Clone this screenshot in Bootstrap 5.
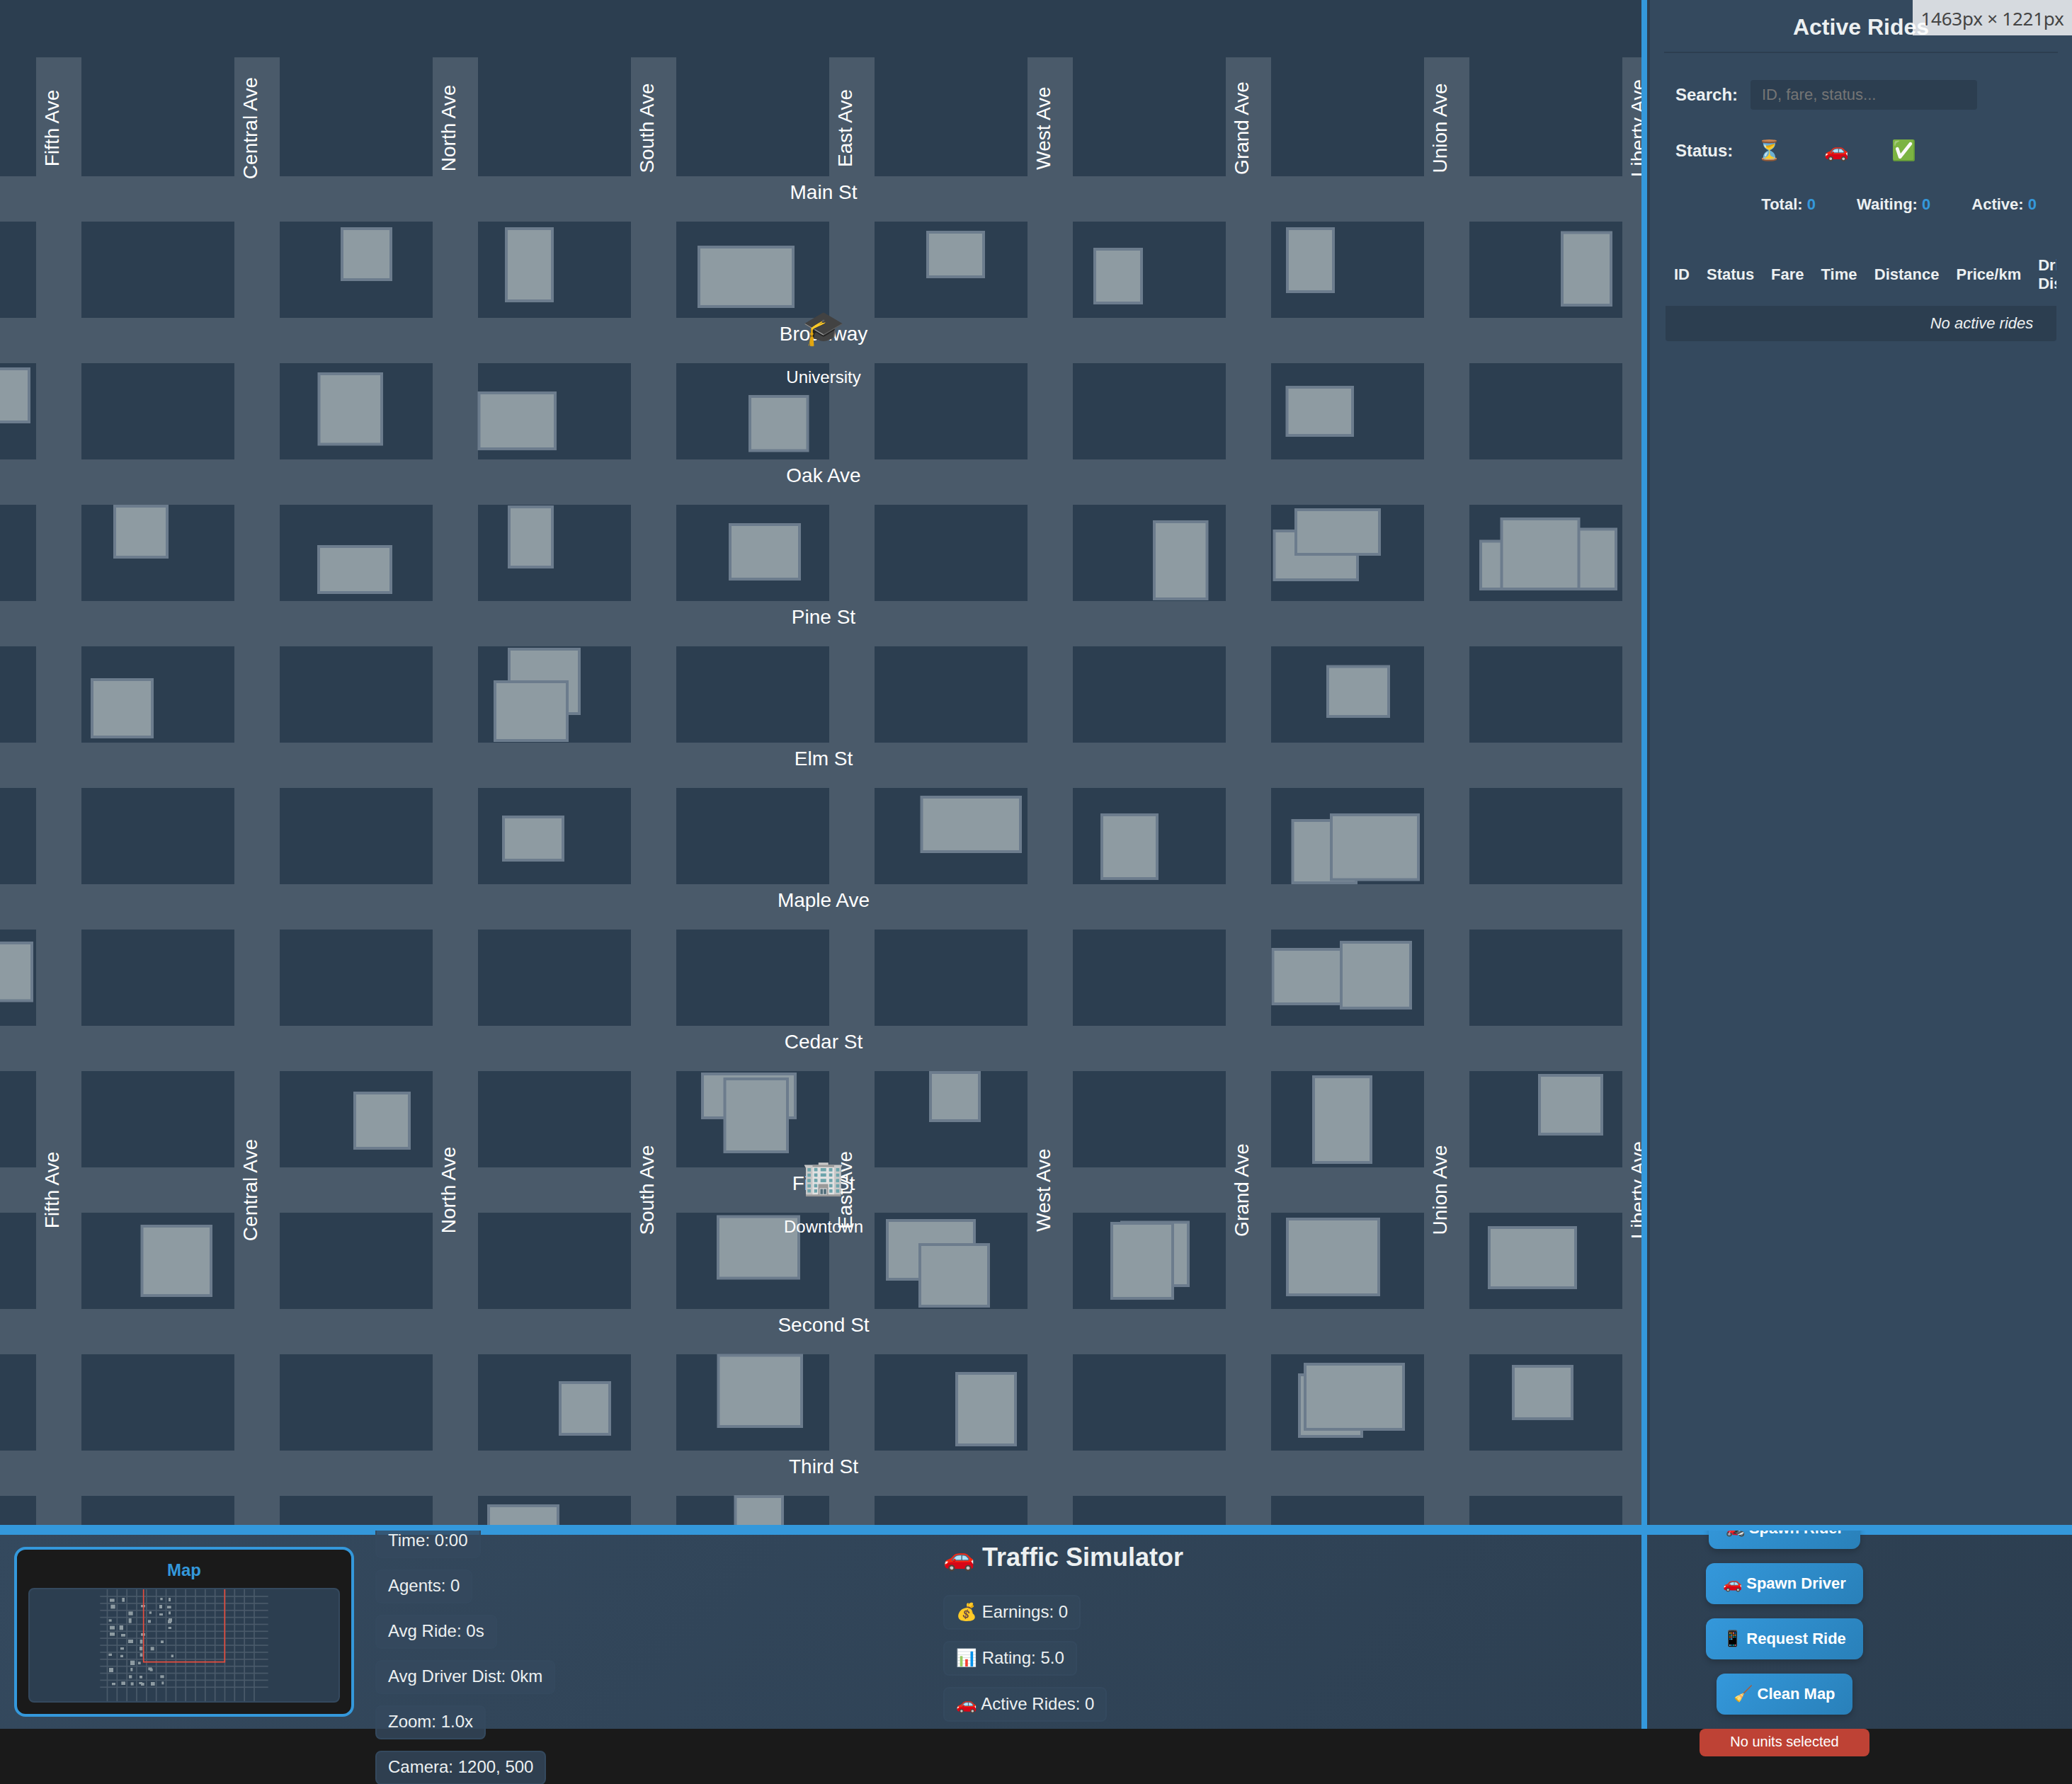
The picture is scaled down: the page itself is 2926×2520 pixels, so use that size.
<!DOCTYPE html>
<html lang="en">
<head>
<meta charset="utf-8">
<title>Traffic Simulator</title>
<link href="https://cdn.jsdelivr.net/npm/bootstrap@5.3.0/dist/css/bootstrap.min.css" rel="stylesheet">
<style>
  html, body { height: 100%; }
  body { background: #1a1a1a; color: #ecf0f1; font-family: "Liberation Sans", Arial, sans-serif; font-size: 24px; line-height: normal; overflow: hidden; }
  .sim-top { height: 2154px; }
  .sim-map { width: 2318px; background: #2c3e50; overflow: hidden; }
  .sim-map svg, .mini-view svg { display: block; }
  .v-split { width: 8px; background: #3498db; }
  .rides { width: 600px; border-left: 4px solid #2c3e50; background: #34495e; padding: 0 20px; }
  .rides h2 { font-size: 32px; line-height: 38px; font-weight: 700; height: 75px; padding-top: 19px; border-bottom: 2px solid #2c3e50; }
  .rides-label { font-weight: 700; line-height: 28px; }
  .rides-filter { margin-top: 38px; }
  .rides-status { margin-top: 41px; }
  .rides-search { width: 320px; height: 42px; background: #2c3e50; border: 0; border-radius: 4px; color: #ecf0f1; font-size: 22px; padding: 0 16px; }
  .rides-search::placeholder { color: #757575; opacity: 1; }
  .status-set { gap: 30px; }
  .status-opt { width: 65px; font-size: 28px; line-height: 34px; text-align: center; }
  .rides-stats { gap: 58px; margin-top: 46px; font-size: 22px; font-weight: 700; padding-right: 30px; line-height: 26px; }
  .rides-stats b { color: #3498db; }
  .rides-clip { margin: 44px 2px 0; overflow: hidden; border-radius: 4px; }
  .rides-table { width: 893px; table-layout: fixed; border-collapse: collapse; font-size: 22px; line-height: 26px; }
  .rides-table th { padding: 16px 12px 18px; font-weight: 700; vertical-align: middle; }
  .rides-table thead tr { height: 86px; }
  .rides-table tbody tr { height: 50px; background: #2c3e50; }
  .rides-table td { text-align: center; font-style: italic; vertical-align: middle; padding: 0 12px; }
  .h-split { height: 14px; background: #3498db; position: relative; z-index: 3; }
  .dock { height: 274px; background: linear-gradient(135deg, #34495e 0%, #2c3e50 100%); }
  .dock-main { width: 2318px; padding: 0 20px; }
  .mini { width: 480px; height: 240px; margin-top: 17px; background: #1a1a1a; border: 4px solid #3498db; border-radius: 16px; padding: 16px; }
  .mini-title { color: #3498db; font-weight: 700; line-height: 26px; height: 38px; }
  .mini-view { height: 162px; border: 2px solid #34495e; border-radius: 8px; background: #2c3e50; overflow: hidden; }
  .chip { background: rgba(52,73,94,.8); border: 2px solid #34495e; border-radius: 8px; padding: 8px 16px; height: 48px; line-height: 26px; white-space: nowrap; }
  .chip-tall { height: 49px; line-height: 28px; background: rgba(52,73,94,.5); }
  .stat-col { width: 783px; margin-left: 30px; gap: 16px; position: relative; z-index: 4; clip-path: inset(9px 0 -400px 0); margin-top: -15px; }
  .title-col { gap: 16px; margin-left: 19px; }
  .title-col h1 { font-size: 36px; line-height: 42px; font-weight: 700; margin: 11px 0 16px; }
  .action-col { width: 240px; margin-left: 74px; margin-top: -38px; gap: 20px; position: relative; z-index: 4; clip-path: inset(32px -40px -400px -40px); }
  .sim-btn { height: 58px; padding: 0 24px; border: 0; border-radius: 12px; background: linear-gradient(135deg, #3498db, #2980b9); color: #fff; font-size: 22px; font-weight: 700; box-shadow: 0 4px 8px rgba(0,0,0,.2); white-space: nowrap; line-height: 58px; }
  .sel-note { width: 240px; height: 39px; line-height: 37px; border-radius: 8px; background: rgba(231,76,60,.8); color: #fff; font-size: 20px; text-align: center; }
  .size-tip { position: absolute; right: 0; top: 0; z-index: 9; width: 225px; height: 50px; background: rgba(255,255,255,.8); color: #444; font: 26px/52px "Noto Sans", sans-serif; text-align: center; white-space: nowrap; letter-spacing: -.25px; }
</style>
<script src="https://cdn.jsdelivr.net/npm/bootstrap@5.3.0/dist/js/bootstrap.bundle.min.js"></script>
</head>
<body>
<div class="sim-top d-flex">
  <main class="sim-map flex-shrink-0"><svg id="city" width="2318" height="2154" font-family="Liberation Sans, Arial, sans-serif" font-size="28" fill="#fff" text-anchor="middle"></svg></main>
  <div class="v-split flex-shrink-0"></div>
  <aside class="rides flex-shrink-0">
    <h2 class="text-center mb-0">Active Rides</h2>
    <div class="rides-filter d-flex align-items-center ps-3">
      <label class="rides-label" for="q" style="width:106px">Search:</label>
      <input id="q" class="rides-search" placeholder="ID, fare, status...">
    </div>
    <div class="rides-status d-flex align-items-center ps-3">
      <span class="rides-label" style="width:100px">Status:</span>
      <div class="status-set d-flex">
        <span class="status-opt">⏳</span><span class="status-opt">🚗</span><span class="status-opt">✅</span>
      </div>
    </div>
    <div class="rides-stats d-flex justify-content-end">
      <span>Total: <b>0</b></span><span>Waiting: <b>0</b></span><span>Active: <b>0</b></span>
    </div>
    <div class="rides-clip">
      <table class="rides-table">
        <colgroup><col style="width:46px"><col style="width:91px"><col style="width:70.5px"><col style="width:75.3px"><col style="width:115.7px"><col style="width:115.7px"><col style="width:90px"><col></colgroup>
        <thead><tr><th>ID</th><th>Status</th><th>Fare</th><th>Time</th><th>Distance</th><th>Price/km</th><th>Driver Dist</th><th></th></tr></thead>
        <tbody><tr><td colspan="8">No active rides</td></tr></tbody>
      </table>
    </div>
  </aside>
</div>
<div class="h-split"></div>
<footer class="dock d-flex">
  <section class="dock-main d-flex align-items-start flex-shrink-0">
    <div class="mini flex-shrink-0">
      <div class="mini-title text-center">Map</div>
      <div class="mini-view"><svg id="mini" width="436" height="158" viewBox="-294 30 1308 474"></svg></div>
    </div>
    <div class="stat-col d-flex flex-column align-items-start flex-shrink-0">
      <span class="chip">Time: 0:00</span>
      <span class="chip">Agents: 0</span>
      <span class="chip">Avg Ride: 0s</span>
      <span class="chip">Avg Driver Dist: 0km</span>
      <span class="chip">Zoom: 1.0x</span>
      <span class="chip">Camera: 1200, 500</span>
    </div>
    <div class="title-col d-flex flex-column align-items-start">
      <h1>🚗 Traffic Simulator</h1>
      <span class="chip chip-tall">💰 Earnings: 0</span>
      <span class="chip chip-tall">📊 Rating: 5.0</span>
      <span class="chip chip-tall">🚗 Active Rides: 0</span>
    </div>
  </section>
  <div class="v-split flex-shrink-0"></div>
  <section class="action-col d-flex flex-column align-items-center flex-shrink-0">
    <button class="sim-btn flex-shrink-0">🏍️ Spawn Rider</button>
    <button class="sim-btn flex-shrink-0">🚗 Spawn Driver</button>
    <button class="sim-btn flex-shrink-0">📱 Request Ride</button>
    <button class="sim-btn flex-shrink-0">🧹 Clean Map</button>
    <div class="sel-note flex-shrink-0">No units selected</div>
  </section>
</footer>
<div class="size-tip">1463px × 1221px</div>
<script>
  // Builds the city: roads, buildings, then labels on top
  const R = (x, y, w, h, f) => `<rect x="${x}" y="${y}" width="${w}" height="${h}" fill="${f}"/>`;
  const road = '#4a5a6a';
  let s = '';
  for (let i = 0; i < 9; i++) s += R(51 + 280 * i, 81, 64, 2073, road);
  for (let j = 0; j < 10; j++) s += R(0, 249 + 200 * j, 2318, 64, road);
  // left, top, right, bottom of every building, back to front
  const buildings = [
    [481,321,554,397],[713,321,782,427],[985,347,1122,435],[-60,519,43,598],[448.5,526,541,629.5],
    [674.5,553,786,636],[1057,558,1142.5,638.5],[160,713,238,789],[448,770,554,839],[717,714,782,803],
    [1029,739,1131,820],[128,958,217,1043],[717,915,820,1010],[697,961,803,1048],[1308,326,1391,393],
    [1544,350,1614,430],[1816,321,1885,414],[2204,326.5,2277,433],[1815.5,545,1912,617],[1628,735,1706.5,848],
    [1797.5,748,1919,821],[1828,718,1950,785],[2089,762.5,2180,834],[2180,745.5,2284,834],[2118.5,731,2231.5,834],
    [1873,939.5,1963,1014],[709,1152,797,1217],[-60,1330,47,1415.5],[499,1542,580,1624],[990,1515,1125,1581],
    [1021.5,1522,1114,1629],[198.5,1730,300,1832],[1012,1716.5,1130,1807.5],[789,1951,863,2028],[1012.5,1912.5,1134,2017],
    [688,2125,790,2200],[1036.5,2112,1107,2200],[1299.5,1124,1443,1205],[1554,1149,1636,1243],[1823.5,1157,1917,1249],
    [1878,1149,2005,1244.5],[1795.5,1339,1910,1420],[1892,1329,1994,1426],[1312,1513,1385,1585],[1853,1519,1938,1644],
    [2172,1517,2264,1604],[1251,1722,1378,1809],[1297,1756,1398,1847],[1582,1724.5,1680,1818],[1568,1726,1658,1836],
    [1816,1720,1949,1831],[2101,1732,2227,1821],[1349,1938,1436,2043],[1833,1940,1925,2031],[1841,1925,1984,2021],
    [2135,1928,2222,2006]];
  for (const [a, b, c, d] of buildings)
    s += `<rect x="${a + 2}" y="${b + 2}" width="${c - a - 4}" height="${d - b - 4}" fill="#8e9ba2" stroke="#6c7c8d" stroke-width="4"/>`;
  ['Main St','Broadway','Oak Ave','Pine St','Elm St','Maple Ave','Cedar St','First St','Second St','Third St']
    .forEach((n, i) => s += `<text x="1163" y="${281 + 200 * i}">${n}</text>`);
  ['Fifth','Central','North','South','East','West','Grand','Union','Liberty'].forEach((n, i) => {
    for (const y of [181, 1681]) s += `<text transform="translate(${83 + 280 * i} ${y}) rotate(-90)">${n} Ave</text>`;
  });
  [['🎓', 'University', 481], ['🏢', 'Downtown', 1681]].forEach(([e, n, y]) =>
    s += `<text x="1163" y="${y - 1}" font-size="48">${e}</text><text x="1163" y="${y + 60}" font-size="24">${n}</text>`);
  document.getElementById('city').innerHTML = s;

  // Overview map, drawn at three units per pixel
  let m = '';
  for (let i = 0; i < 16; i++) m += R(32 + 41.5 * i, 30, 5, 474, road);
  for (let j = 0; j < 14; j++) m += R(4, 57.5 + 29.6 * j, 712, 5, road);
  [[45,70,20,13],[97,66,11,17],[49,95,19,17],[177,96,18,10],[259,66,10,10],[294,66,9,15],[255,96,12,15],[288,100,17,11],
   [124,124,19,16],[212,124,10,10],[255,132,15,9],[294,124,9,12],[41,157,12,10],[125,153,12,20],[207,160,12,12],[294,153,15,15],[291,160,15,14],
   [45,185,21,15],[86,183,16,19],[293,189,13,9],[45,213,21,14],[93,219,18,11],[177,216,18,11],[123,243,21,15],[173,243,11,17],[261,247,12,11],
   [90,276,15,10],[171,273,13,16],[218,274,15,15],[40,302,14,10],[90,308,12,10],[173,301,11,14],[305,307,10,11],[132,332,19,19],[165,337,11,11],
   [42,363,18,18],[133,363,9,14],[208,361,16,12],[215,366,12,11],[126,394,13,13],[171,396,12,11],[259,394,16,12],[54,426,15,10],[94,421,17,14],
   [134,424,12,13],[169,423,14,9],[177,426,14,12],[219,423,17,15],[265,421,9,12]]
    .forEach(b => m += R(...b, '#8e9ba2'));
  m += '<path d="M188 20V338H532V20" fill="none" stroke="#e74c3c" stroke-width="5"/>';
  document.getElementById('mini').innerHTML = m;
</script>
</body>
</html>
